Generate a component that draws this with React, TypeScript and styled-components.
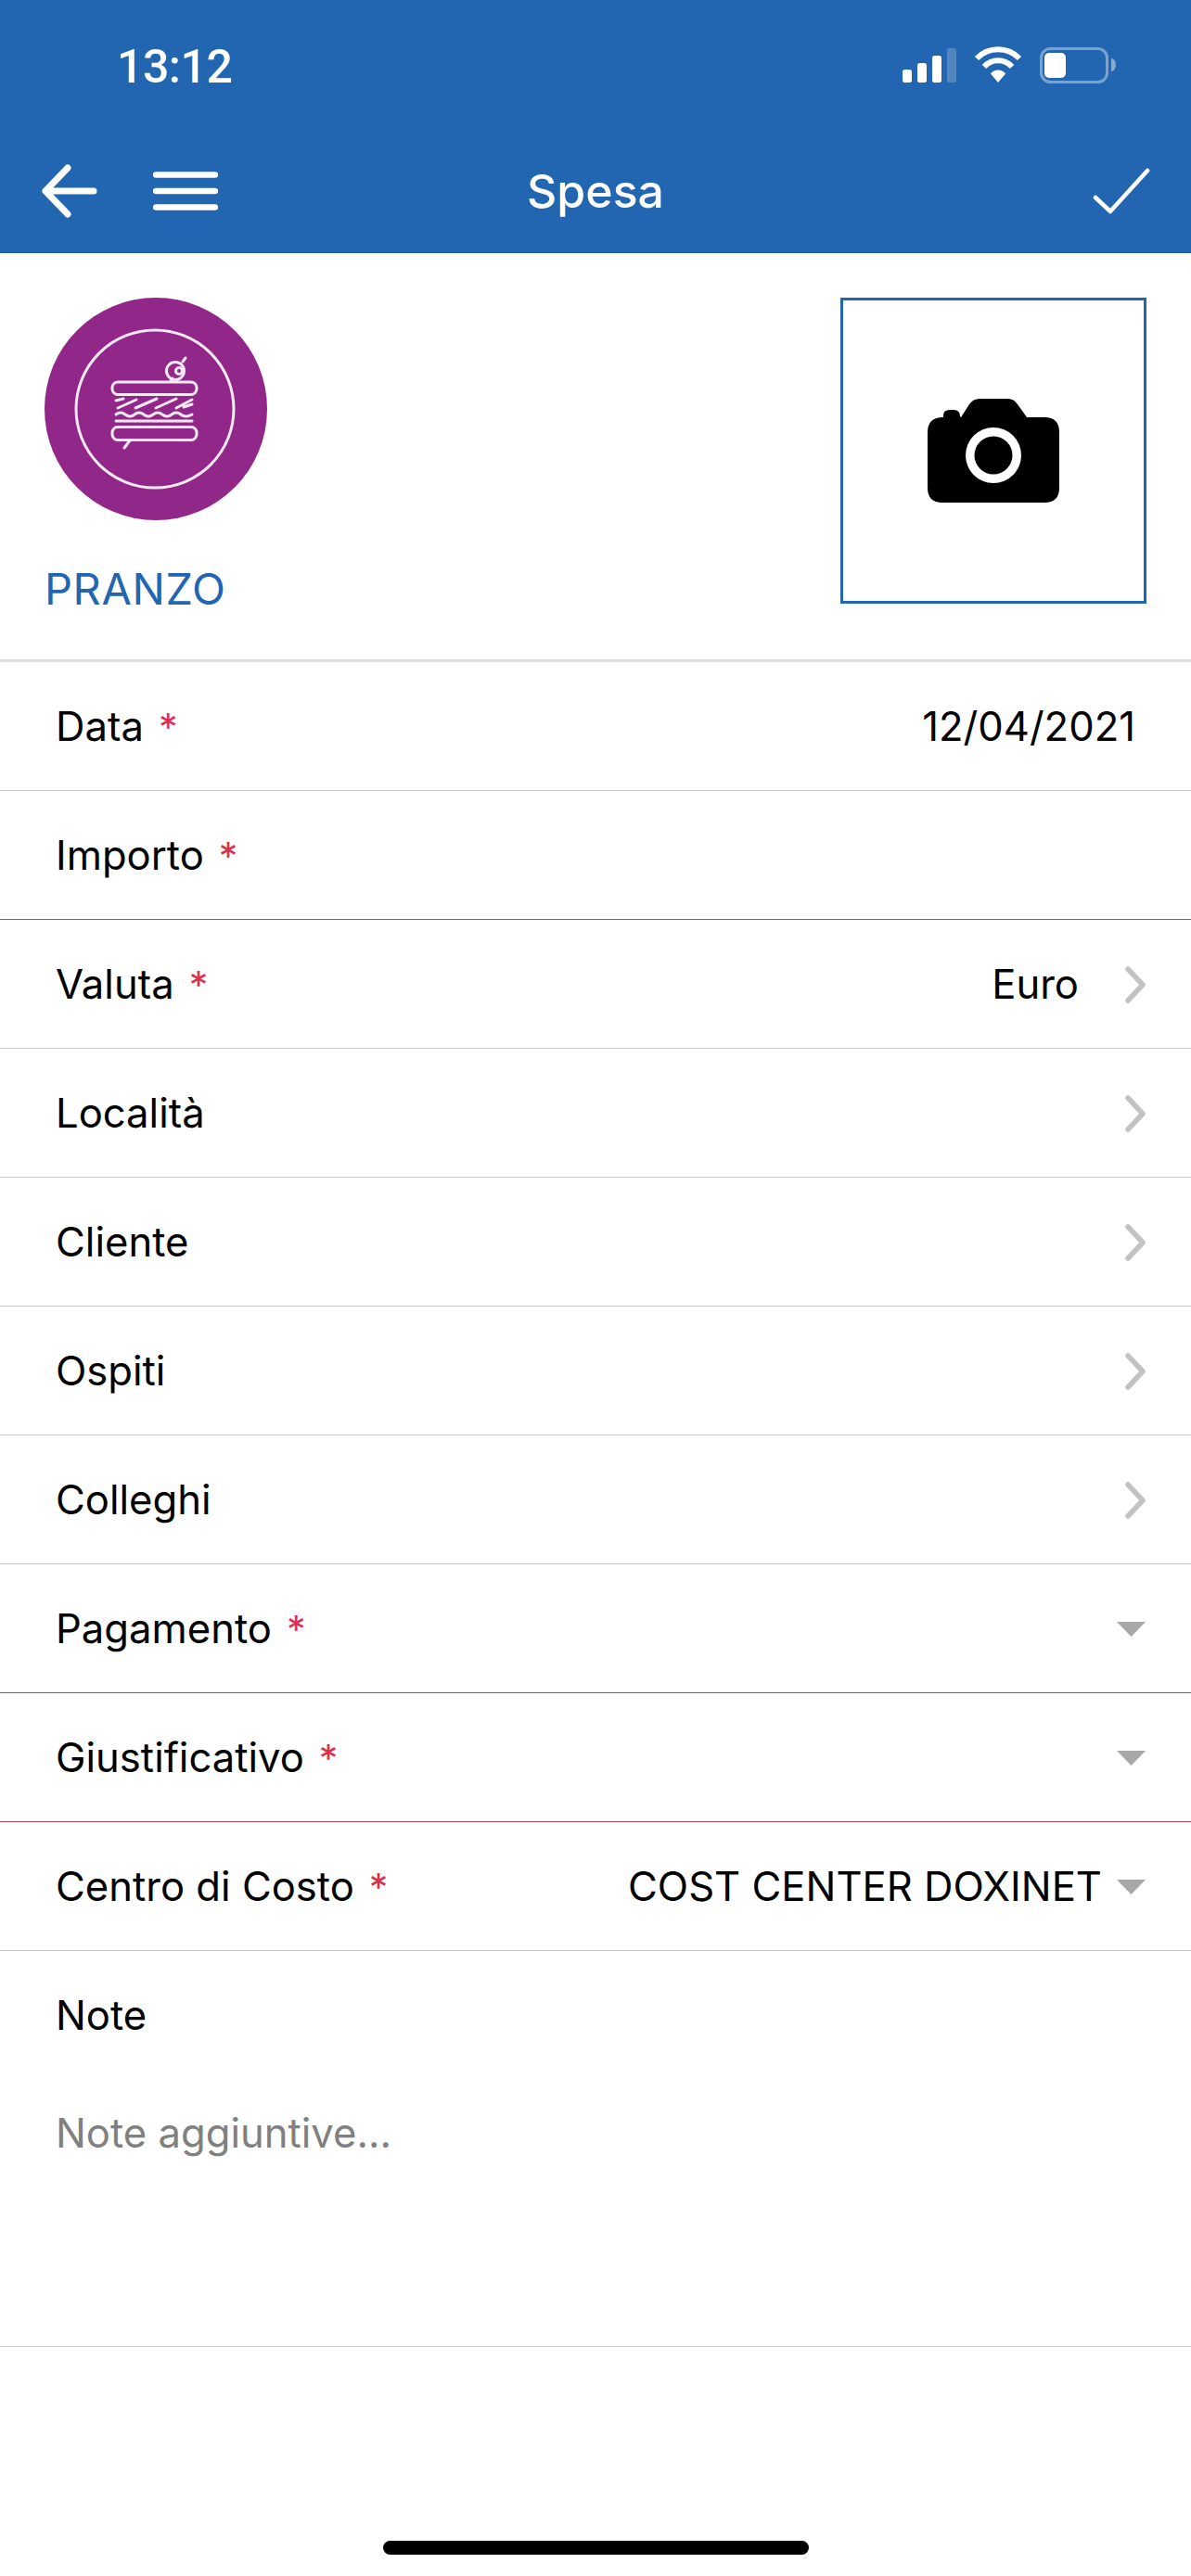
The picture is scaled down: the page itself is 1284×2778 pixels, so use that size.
import React from "react";
import styled, { createGlobalStyle } from "styled-components";

const Global = createGlobalStyle`
  html, body { margin: 0; padding: 0; background: #fff; }
  #root { width: 1284px; height: 2778px; overflow: hidden; }
`;

const BLUE = "#2265b0";

const Page = styled.div`
  width: 1284px;
  height: 2778px;
  display: flex;
  flex-direction: column;
  background: #fff;
  font-family: Inter, Roboto, "Liberation Sans", sans-serif;
  color: #000;
`;

const Header = styled.header`
  height: 273px;
  box-sizing: border-box;
  background: ${BLUE};
  border-bottom: 1px solid #1c5798;
  color: #fff;
  display: flex;
  flex-direction: column;
`;

const StatusBar = styled.div`
  height: 146px;
  box-sizing: border-box;
  padding: 0 81px 0 126px;
  display: flex;
  justify-content: space-between;
  align-items: flex-start;
`;

const Time = styled.div`
  font-family: Roboto, "Liberation Sans", sans-serif;
  font-size: 50px;
  font-weight: 500;
  line-height: 59px;
  margin-top: 43px;
  letter-spacing: -0.5px;
`;

const StatusIcons = styled.svg`
  display: block;
  margin-top: 50px;
`;

const NavBar = styled.nav`
  flex: 1;
  display: grid;
  grid-template-columns: 1fr auto 1fr;
  align-items: center;
  padding: 0 41px;
  margin-top: -7px;
`;

const NavLeft = styled.div`
  display: flex;
  align-items: center;
  gap: 56px;
`;

const NavRight = styled.div`
  display: flex;
  justify-content: flex-end;
  padding-right: 3px;
`;

const NavTitle = styled.h1`
  margin: 0;
  font-size: 50px;
  font-weight: 500;
  line-height: 60px;
`;

const NavIcon = styled.svg`
  display: block;
`;

const TopSection = styled.section`
  height: 441px;
  box-sizing: border-box;
  border-bottom: 3px solid #dcdcdc;
  padding: 48px 48px 0 48px;
  display: flex;
  justify-content: space-between;
  align-items: flex-start;
`;

const Category = styled.div`
  display: flex;
  flex-direction: column;
  align-items: flex-start;
`;

const CategoryBadge = styled.svg`
  display: block;
`;

const CategoryLabel = styled.div`
  margin-top: 47px;
  font-size: 47px;
  line-height: 54px;
  letter-spacing: 0.6px;
  color: ${BLUE};
`;

const PhotoBox = styled.div`
  width: 330px;
  height: 330px;
  box-sizing: border-box;
  border: 3px solid ${BLUE};
  display: flex;
  align-items: center;
  justify-content: center;
`;

const Row = styled.div<{ $invalid?: boolean; $pad?: number }>`
  height: 139px;
  flex: none;
  box-sizing: border-box;
  border-bottom: 1px solid ${(p) => (p.$invalid ? "#c9405a" : "#c8c8c8")};
  padding: 1px ${(p) => p.$pad ?? 49}px 0 60px;
  display: flex;
  align-items: center;
  font-size: 43.6px;
`;

const Label = styled.span`
  line-height: 52px;
`;

const Required = styled.span`
  color: #dc3050;
  margin-left: 16px;
  font-size: 41px;
  line-height: 48px;
`;

const Value = styled.span<{ $gap?: number }>`
  margin-left: auto;
  margin-right: ${(p) => p.$gap ?? 0}px;
  line-height: 52px;
`;

const Trailing = styled.svg`
  display: block;
  flex: none;
`;

const Spacer = styled.span`
  margin-left: auto;
`;

const NoteBlock = styled.div`
  height: 427px;
  flex: none;
  box-sizing: border-box;
  border-bottom: 1px solid #c8c8c8;
  padding: 44px 60px 0;
  font-size: 43.6px;
`;

const NoteLabel = styled.div`
  line-height: 52px;
`;

const NotePlaceholder = styled.div`
  margin-top: 75px;
  line-height: 52px;
  color: #808080;
`;

const HomeBar = styled.div`
  width: 459px;
  height: 15px;
  border-radius: 8px;
  background: #000;
  margin: 209px auto 0;
`;

const Chevron = () => (
  <Trailing width="22" height="40" viewBox="0 0 22 40">
    <path d="M3 3 L19 20 L3 37" fill="none" stroke="#c2c2c2" strokeWidth="5.5" strokeLinecap="round" strokeLinejoin="round" />
  </Trailing>
);

const Caret = () => (
  <Trailing width="31" height="16" viewBox="0 0 31 16">
    <path d="M0 0 H31 L15.5 16 Z" fill="#a8a8a8" />
  </Trailing>
);

const Star = () => <Required>*</Required>;

export default function App() {
  return (
    <Page>
      <Global />
      <Header>
        <StatusBar>
          <Time>13:12</Time>
          <StatusIcons width="232" height="42" viewBox="971 52 232 42">
            <rect x="973" y="77" width="10" height="14" rx="2.5" fill="#fff" />
            <rect x="989" y="70" width="10" height="21" rx="2.5" fill="#fff" />
            <rect x="1005" y="62" width="10" height="29" rx="2.5" fill="#fff" />
            <rect x="1021" y="54" width="10" height="37" rx="2.5" fill="#fff" opacity="0.22" />
            <path d="M1053 65 A 32 32 0 0 1 1099 65" fill="none" stroke="#fff" strokeWidth="6" />
            <path d="M1061 74 A 20 20 0 0 1 1091 74" fill="none" stroke="#fff" strokeWidth="6" />
            <path d="M1068 81.5 A 10 10 0 0 1 1084 81.5 L1076 91 Z" fill="#fff" />
            <rect x="1122.5" y="54.5" width="71" height="36" rx="10" fill="none" stroke="#fff" strokeOpacity="0.4" strokeWidth="3" />
            <rect x="1126" y="59" width="23" height="27" rx="5" fill="#fff" />
            <path d="M1198 65 A 5 7 0 0 1 1198 79 Z" fill="#fff" fillOpacity="0.45" />
          </StatusIcons>
        </StatusBar>
        <NavBar>
          <NavLeft>
            <NavIcon width="68" height="58" viewBox="0 0 68 58">
              <path d="M32 4 L8 29 L32 54 M8 29 H60" fill="none" stroke="#fff" strokeWidth="7" strokeLinecap="round" strokeLinejoin="round" />
            </NavIcon>
            <NavIcon width="70" height="42" viewBox="0 0 70 42">
              <path d="M3 3.5 H67 M3 21 H67 M3 38.5 H67" fill="none" stroke="#fff" strokeWidth="6.5" strokeLinecap="round" />
            </NavIcon>
          </NavLeft>
          <NavTitle>Spesa</NavTitle>
          <NavRight>
            <NavIcon width="62" height="50" viewBox="0 0 62 50">
              <path d="M3 32 L19 47 L59 3" fill="none" stroke="#fff" strokeWidth="4.5" strokeLinecap="round" strokeLinejoin="round" />
            </NavIcon>
          </NavRight>
        </NavBar>
      </Header>

      <TopSection>
        <Category>
          <CategoryBadge width="240" height="240" viewBox="48 321 240 240">
            <circle cx="168" cy="441" r="120" fill="#92278a" />
            <g fill="none" stroke="#f7e9f5" strokeWidth="3" strokeLinecap="round">
              <circle cx="167" cy="441" r="85" />
              <rect x="121" y="412" width="91" height="13.5" rx="6" />
              <rect x="121" y="460.5" width="91" height="14" rx="6" />
              <circle cx="189" cy="400" r="9.5" />
              <circle cx="193" cy="400" r="3.5" />
              <path d="M184 411 L186 408 M197 390 L200 386 M134 483 L140 475" />
              <path d="M125 432 L133 430 M127 440 L147 431 M146 440 L169 430 M168 440 L190 430 M190 440 L207 431 M198 439 L207 436" />
              <path d="M125 447 Q130 443 135 447 T145 447 T155 447 T165 447 T175 447 T185 447 T195 447 T207 447" />
              <path d="M125 454 H207" strokeWidth="3" />
            </g>
          </CategoryBadge>
          <CategoryLabel>PRANZO</CategoryLabel>
        </Category>
        <PhotoBox>
          <svg width="142" height="112" viewBox="0 0 142 112">
            <path
              fillRule="evenodd"
              fill="#000"
              d="M17 20 V18 Q17 12 24 12 H28 Q35 12 35 19 L36 20 L45 6 Q49 0 56 0 H87 Q93 0 97 6 L107 20 H126 Q142 20 142 36 V96 Q142 112 126 112 H16 Q0 112 0 96 V36 Q0 20 17 20 Z M71 31 A30 30 0 1 0 71 91 A30 30 0 1 0 71 31 Z M71 40.5 A20.5 20.5 0 1 1 71 81.5 A20.5 20.5 0 1 1 71 40.5 Z"
            />
          </svg>
        </PhotoBox>
      </TopSection>

      <Row $pad={60}>
        <Label>Data</Label>
        <Star />
        <Value>12/04/2021</Value>
      </Row>
      <Row $invalid>
        <Label>Importo</Label>
        <Star />
      </Row>
      <Row>
        <Label>Valuta</Label>
        <Star />
        <Value $gap={50}>Euro</Value>
        <Chevron />
      </Row>
      <Row>
        <Label>Località</Label>
        <Spacer />
        <Chevron />
      </Row>
      <Row>
        <Label>Cliente</Label>
        <Spacer />
        <Chevron />
      </Row>
      <Row>
        <Label>Ospiti</Label>
        <Spacer />
        <Chevron />
      </Row>
      <Row>
        <Label>Colleghi</Label>
        <Spacer />
        <Chevron />
      </Row>
      <Row $invalid>
        <Label>Pagamento</Label>
        <Star />
        <Spacer />
        <Caret />
      </Row>
      <Row $invalid>
        <Label>Giustificativo</Label>
        <Star />
        <Spacer />
        <Caret />
      </Row>
      <Row>
        <Label>Centro di Costo</Label>
        <Star />
        <Value $gap={16}>COST CENTER DOXINET</Value>
        <Caret />
      </Row>
      <NoteBlock>
        <NoteLabel>Note</NoteLabel>
        <NotePlaceholder>Note aggiuntive...</NotePlaceholder>
      </NoteBlock>
      <HomeBar />
    </Page>
  );
}
